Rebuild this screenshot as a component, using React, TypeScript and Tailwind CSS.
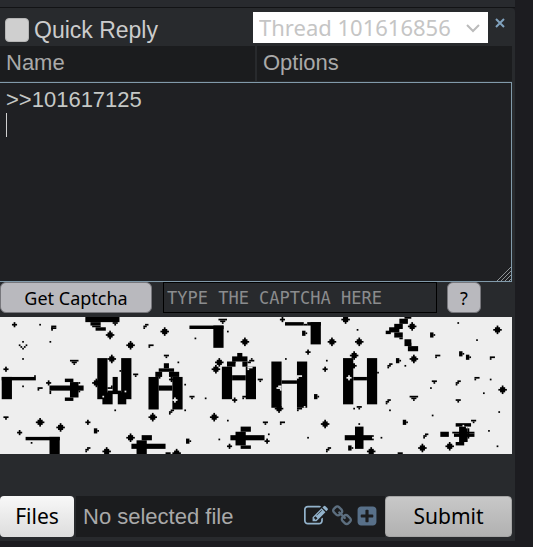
import { useState } from "react";

// every block is [x, y, width, height] on the 300x80 captcha grid
const blocks = [
  [50, 0, 20, 3], [53, 3, 6, 2], [54, 5, 5, 1], [56, 6, 6, 2], [66, 3, 3, 1], [67, 4, 1, 1],
  [1, 35, 6, 13], [1, 35, 20, 2], [20, 34, 1, 1],
  [29, 40, 20, 3], [29, 43, 1, 2], [38, 36, 5, 2], [41, 38, 5, 9], [38, 47, 5, 2], [46, 38, 1, 1], [46, 43, 1, 1],
  [57, 24, 6, 24], [60, 44, 6, 7], [71, 24, 6, 24], [69, 44, 5, 7], [66, 35, 3, 10], [63, 43, 8, 2], [63, 41, 2, 1], [65, 40, 1, 2], [70, 31, 1, 1],
  [87, 35, 6, 19], [93, 40, 8, 3], [101, 35, 6, 19], [96, 27, 3, 3], [93, 30, 9, 2], [91, 32, 4, 3], [99, 32, 6, 3], [99, 36, 3, 1], [100, 35, 1, 3], [93, 35, 1, 1],
  [15, 70, 20, 2], [29, 70, 6, 10],
  [83, 69, 6, 3], [80, 72, 6, 8], [77, 74, 20, 3],
  [111, 5, 20, 2], [125, 5, 6, 13],
  [167, 3, 11, 2], [178, 4, 2, 1], [180, 3, 8, 2], [182, 3, 6, 13],
  [130, 29, 6, 19], [144, 29, 6, 19], [136, 34, 8, 3], [139, 21, 3, 3], [136, 23, 9, 3], [133, 26, 5, 3], [136, 26, 2, 1], [142, 26, 3, 3], [146, 25, 3, 1], [147, 24, 1, 1], [145, 26, 2, 1],
  [159, 26, 6, 27], [174, 26, 6, 27], [165, 37, 9, 2], [174, 53, 3, 1], [174, 54, 1, 1],
  [135, 69, 20, 3], [141, 64, 6, 3], [138, 67, 6, 8], [141, 75, 6, 2],
  [201, 24, 6, 27], [215, 24, 6, 27], [207, 35, 8, 2], [221, 32, 1, 1],
  [202, 69, 16, 3], [208, 64, 5, 13], [218, 69, 1, 1], [218, 71, 1, 1],
  [237, 0, 4, 1], [234, 1, 5, 3], [231, 4, 5, 3], [228, 6, 6, 3], [226, 8, 3, 2], [231, 9, 5, 3], [234, 12, 2, 1], [237, 13, 4, 4], [240, 15, 1, 2], [239, 17, 6, 3],
  [258, 67, 5, 3], [265, 67, 13, 1], [266, 68, 12, 2], [267, 62, 9, 2], [269, 64, 5, 9], [274, 65, 1, 6], [267, 73, 5, 2],
];

const holes = [
  [60, 46, 1, 1], [73, 43, 1, 1], [102, 47, 1, 3], [101, 48, 3, 1],
  [163, 40, 2, 1], [162, 41, 3, 1], [164, 42, 1, 1], [174, 34, 3, 1], [174, 35, 1, 1],
  [204, 34, 1, 3], [203, 35, 3, 1], [178, 52, 1, 1], [271, 63, 1, 1], [273, 64, 1, 1], [145, 29, 3, 1], [145, 30, 1, 1],
];

const shapes: Record<string, number[][]> = {
  dot: [[0, 0, 1, 1]],
  plus: [[-1, 0, 3, 1], [0, -1, 1, 3]],
  diamond: [[-2, 0, 5, 1], [-1, -1, 3, 3], [0, -2, 1, 5]],
  triangle: [[-2, 0, 5, 1], [-1, 1, 3, 1], [0, 2, 1, 1]],
  wedge: [[-1, 0, 3, 1], [0, 1, 1, 1]],
  flag: [[-1, -1, 2, 3], [1, 0, 1, 1]],
  corner: [[-1, 0, 3, 1], [-1, 1, 1, 1]],
  zig: [[0, -1, 2, 1], [-1, 0, 2, 1], [-1, 1, 1, 1]],
};

const specks: Record<string, number[][]> = {
  dot: [
    [23, 4], [29, 14], [13, 14], [13, 24], [13, 40], [18, 73], [67, 54], [104, 26], [11, 16], [12, 17], [13, 18], [14, 17], [15, 16],
    [114, 12], [133, 8], [108, 39], [120, 47], [108, 54], [133, 60], [128, 71], [167, 24], [191, 25], [180, 70], [157, 68],
    [268, 3], [209, 7], [279, 13], [237, 28], [252, 41], [287, 36], [283, 44], [292, 55], [253, 57], [228, 54], [286, 66], [291, 75], [223, 70], [207, 53], [210, 62],
  ],
  plus: [[8, 4], [3, 30], [28, 38], [51, 61], [11, 67], [165, 1], [180, 20], [190, 30], [137, 48], [156, 72], [134, 75]],
  diamond: [
    [64, 10], [76, 16], [96, 8], [65, 24], [23, 61], [35, 64], [89, 58], [76, 70], [62, 78], [56, 38], [103, 79],
    [143, 14], [194, 14], [128, 26], [126, 30], [125, 58], [190, 62], [202, 1], [163, 53], [207, 22],
    [241, 5], [291, 7], [210, 14], [242, 24], [294, 42], [247, 76], [263, 75], [217, 78],
  ],
  triangle: [[43, 25], [130, 1], [242, 46]],
  wedge: [[79, 33], [97, 22], [3, 58], [152, 36], [112, 46], [155, 61], [254, 37], [268, 48], [210, 52], [277, 60], [234, 79]],
  flag: [[56, 66], [178, 9], [185, 46], [110, 72], [205, 76], [253, 10], [270, 21], [274, 23], [233, 25], [237, 61], [207, 28]],
  corner: [[31, 5], [31, 6], [88, 16], [23, 41], [165, 61], [256, 22], [288, 23], [279, 35], [98, 79], [143, 46]],
  zig: [[85, 5], [51, 77], [100, 55], [192, 77], [228, 28], [268, 38], [227, 49], [249, 69]],
};

function CaptchaImage() {
  return (
    <svg viewBox="0 0 300 80" preserveAspectRatio="none" className="block h-[137px] w-full bg-[#eeeeee]" role="img" aria-label="Captcha">
      {blocks.map(([x, y, w, h], i) => (
        <rect key={i} x={x} y={y} width={w} height={h} />
      ))}
      {Object.keys(specks).map((kind) =>
        specks[kind].map(([cx, cy], i) =>
          shapes[kind].map(([x, y, w, h], j) => (
            <rect key={`${kind}-${i}-${j}`} x={cx + x} y={cy + y} width={w} height={h} />
          ))
        )
      )}
      {holes.map(([x, y, w, h], i) => (
        <rect key={i} x={x} y={y} width={w} height={h} fill="#eeeeee" />
      ))}
    </svg>
  );
}

function EditIcon() {
  return (
    <svg viewBox="0 0 1792 1792" className="size-6 fill-[#93b3cc]">
      <path d="M888 1184l116-116-152-152-116 116v56h96v96h56zm440-720q-16-16-33 1l-350 350q-17 17-1 33t33-1l350-350q17-17 1-33zm80 594v190q0 119-84.5 203.5t-203.5 84.5h-832q-119 0-203.5-84.5t-84.5-203.5v-832q0-119 84.5-203.5t203.5-84.5h832q63 0 117 25 15 7 18 23 3 17-9 29l-49 49q-14 14-32 8-23-6-45-6h-832q-66 0-113 47t-47 113v832q0 66 47 113t113 47h832q66 0 113-47t47-113v-126q0-13 9-22l64-64q15-15 35-7t20 29zm-96-738l288 288-672 672h-288v-288zm444 132l-92 92-288-288 92-92q28-28 68-28t68 28l152 152q28 28 28 68t-28 68z" />
    </svg>
  );
}

function LinkIcon() {
  return (
    <svg viewBox="0 0 1792 1792" className="size-[22px] fill-[#5c6e7f]">
      <path d="M1520 1216q0-40-28-68l-208-208q-28-28-68-28-42 0-72 32 3 3 19 18.5t21.5 21.5 15 19 13 25.5 3.5 27.5q0 40-28 68t-68 28q-15 0-27.5-3.5t-25.5-13-19-15-21.5-21.5-18.5-19q-33 31-33 73 0 40 28 68l206 207q27 27 68 27 40 0 68-26l147-146q28-28 28-67zm-703-705q0-40-28-68l-206-207q-28-28-68-28-39 0-68 27l-147 146q-28 28-28 67 0 40 28 68l208 208q27 27 68 27 42 0 72-31-3-3-19-18.5t-21.5-21.5-15-19-13-25.5-3.5-27.5q0-40 28-68t68-28q15 0 27.5 3.5t25.5 13 19 15 21.5 21.5 18.5 19q33-31 33-73zm895 705q0 120-85 203l-147 146q-83 83-203 83-121 0-204-85l-206-207q-83-83-83-203 0-123 88-209l-88-88q-86 88-208 88-120 0-204-84l-208-208q-84-84-84-204t85-203l147-146q83-83 203-83 121 0 204 85l206 207q83 83 83 203 0 123-88 209l88 88q86-88 208-88 120 0 204 84l208 208q84 84 84 204z" />
    </svg>
  );
}

function PlusIcon() {
  return (
    <svg viewBox="0 0 1792 1792" className="size-[22px] fill-[#587089]">
      <path d="M1408 960v-128q0-26-19-45t-45-19h-320v-320q0-26-19-45t-45-19h-128q-26 0-45 19t-19 45v320h-320q-26 0-45 19t-19 45v128q0 26 19 45t45 19h320v320q0 26 19 45t45 19h128q26 0 45-19t19-45v-320h320q26 0 45-19t19-45zm256-544v960q0 119-84.5 203.5t-203.5 84.5h-960q-119 0-203.5-84.5t-84.5-203.5v-960q0-119 84.5-203.5t203.5-84.5h960q119 0 203.5 84.5t84.5 203.5z" />
    </svg>
  );
}

export default function App() {
  const [comment, setComment] = useState(">>101617125\n");

  return (
    <div className="min-h-screen bg-[#1c1c20] pr-[18px] font-['Liberation_Sans',sans-serif]">
      <div className="h-2 border-b border-[#121315] bg-[#282a2e]" />
      <form className="rounded-tr-sm bg-[#282a2d] pr-[3px] pb-1" onSubmit={(e) => e.preventDefault()}>
        {/* Title bar */}
        <div className="flex h-[38px] items-center">
          <label className="flex flex-1 items-center gap-[5px] pt-[6px] pl-[5px] text-[23px] leading-7 text-[#cccccc]">
            <input type="checkbox" className="size-6 appearance-none rounded border border-[#b5b5b5] bg-[#cfcfcf]" />
            Quick Reply
          </label>
          <div className="relative">
            <select
              aria-label="Thread"
              className="block h-[31px] w-[235px] appearance-none bg-white pl-[6px] font-['Noto_Sans',sans-serif] text-[22px] leading-[30px] text-[#c5c5c5]"
            >
              <option>Thread 101616856</option>
            </select>
            <svg viewBox="0 0 14 9" className="pointer-events-none absolute top-3 right-2 h-[9px] w-[14px]" fill="none" stroke="#bbbbbb" strokeWidth="2">
              <path d="M1 1l6 6 6-6" />
            </svg>
          </div>
          <button type="button" aria-label="Close" className="flex w-6 justify-center pb-2">
            <svg viewBox="0 0 10 10" className="size-[10px]" stroke="#81a2be" strokeWidth="2">
              <path d="M1 1l8 8M9 1l-8 8" />
            </svg>
          </button>
        </div>

        {/* Name and options */}
        <div className="flex gap-[2px] pb-px">
          <input aria-label="Name" placeholder="Name" className="h-[35px] min-w-0 flex-1 bg-[#1b1c1e] pb-[2px] pl-[6px] text-[22px] text-[#c5c8c6] placeholder:text-[#a9a9a9]" />
          <input aria-label="Options" placeholder="Options" className="h-[35px] min-w-0 flex-1 bg-[#1b1c1e] pb-[2px] pl-[6px] text-[22px] text-[#c5c8c6] placeholder:text-[#a9a9a9]" />
        </div>

        <div className="relative">
          <textarea
            aria-label="Comment"
            value={comment}
            onChange={(e) => setComment(e.target.value)}
            className="block h-[200px] w-full resize-none border border-l-0 border-[#819aaa] bg-[#1f2023] px-[6px] py-1 text-[22px] leading-[26px] text-[#c5c8c6] outline-none"
          />
          <span className="absolute top-[31px] left-[6px] h-6 w-px bg-[#d0d0d0]" />
          <svg viewBox="0 0 14 14" className="pointer-events-none absolute right-px bottom-px size-[14px]" stroke="#909497" strokeWidth="1">
            <path d="M0 14L14 0M4 14L14 4M8 14L14 8M12 14L14 12" />
          </svg>
        </div>

        {/* Captcha */}
        <div className="flex h-[35px] items-start">
          <button type="button" className="h-[31px] w-[152px] rounded-md border border-[#77777c] bg-[#b9b9be] font-['Noto_Sans',sans-serif] text-[18px] leading-7 text-black">
            Get Captcha
          </button>
          <input
            aria-label="Captcha"
            placeholder="TYPE THE CAPTCHA HERE"
            className="ml-[11px] h-[31px] w-[274px] border border-black bg-[#282a2d] pl-[3px] font-['DejaVu_Sans_Mono',monospace] text-[17px] text-[#c5c8c6] placeholder:text-[#8b8c8e]"
          />
          <button type="button" className="ml-[10px] h-[31px] w-[34px] rounded-md border border-[#77777c] bg-[#b9b9be] font-['Noto_Sans',sans-serif] text-[18px] leading-7 text-black">
            ?
          </button>
        </div>
        <CaptchaImage />

        {/* File row */}
        <div className="mt-[42px] flex h-[41px]">
          <button type="button" className="w-[74px] rounded-sm bg-linear-to-b from-[#f8f8f8] to-[#dddddd] font-['Noto_Sans',sans-serif] text-[21px] text-black">
            Files
          </button>
          <div className="ml-[2px] flex min-w-0 flex-1 items-center bg-[#1b1c1e] px-[7px] pb-px">
            <span className="flex-1 text-[22px] whitespace-nowrap text-[#a9a9a9]">No selected file</span>
            <button type="button" aria-label="Edit"><EditIcon /></button>
            <a href="#link" aria-label="Link" className="ml-[3px]"><LinkIcon /></a>
            <button type="button" aria-label="Add" className="ml-[3px]"><PlusIcon /></button>
          </div>
          <button type="submit" className="w-[127px] rounded-sm border border-[#a5a5a5] bg-linear-to-b from-[#c8c8c8] to-[#b1b1b1] font-['Noto_Sans',sans-serif] text-[21px] text-black">
            Submit
          </button>
        </div>
      </form>
    </div>
  );
}
